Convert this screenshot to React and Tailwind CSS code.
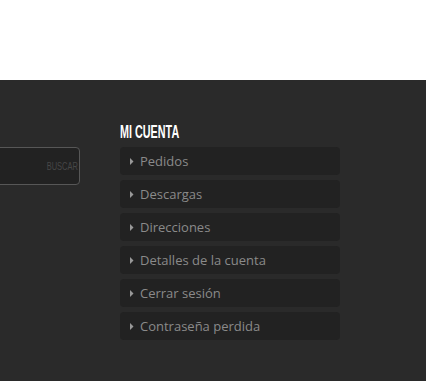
import React from 'react';

const links = [
  'Pedidos',
  'Descargas',
  'Direcciones',
  'Detalles de la cuenta',
  'Cerrar sesión',
  'Contraseña perdida',
];

const sans = { fontFamily: '"Liberation Sans", Arial, sans-serif' };

export default function App() {
  return (
    <div className="w-[426px] h-[381px] overflow-hidden bg-white">
      <div className="h-[80px] bg-white" />
      <div className="h-[301px] bg-[#2a2a2a] flex gap-[40px] pt-[40px]">
        {/* search widget */}
        <div className="w-[100px] -ml-[20px] flex flex-col shrink-0">
          <div className="h-[27px]" />
          <div className="h-[38px] rounded-[4px] border border-[#575757] bg-[#222222] flex items-center justify-end pr-[1px]">
            <span
              className="inline-block text-[11px] text-[#474747] uppercase leading-none scale-x-[0.68] origin-right"
              style={sans}
            >
              Buscar
            </span>
          </div>
        </div>

        {/* account menu */}
        <div className="w-[220px] flex flex-col">
          <h3 className="h-[27px]">
            <span
              className="inline-block text-[18px] leading-[18px] text-white uppercase font-bold scale-x-[0.6] origin-left"
              style={sans}
            >
              Mi cuenta
            </span>
          </h3>
          <ul className="flex flex-col gap-[5px]">
            {links.map((l) => (
              <li
                key={l}
                className="h-[28px] rounded-[4px] bg-[#222222] flex items-center pl-[10px]"
              >
                <svg width="4" height="7" viewBox="0 0 4 7" className="mr-[6px] shrink-0">
                  <path d="M0 0 L3.5 3.5 L0 7 Z" fill="#999999" />
                </svg>
                <span
                  className="text-[13px] text-[#8a8a8a] leading-none"
                  style={{ fontFamily: '"Open Sans", sans-serif' }}
                >
                  {l}
                </span>
              </li>
            ))}
          </ul>
        </div>
      </div>
    </div>
  );
}
